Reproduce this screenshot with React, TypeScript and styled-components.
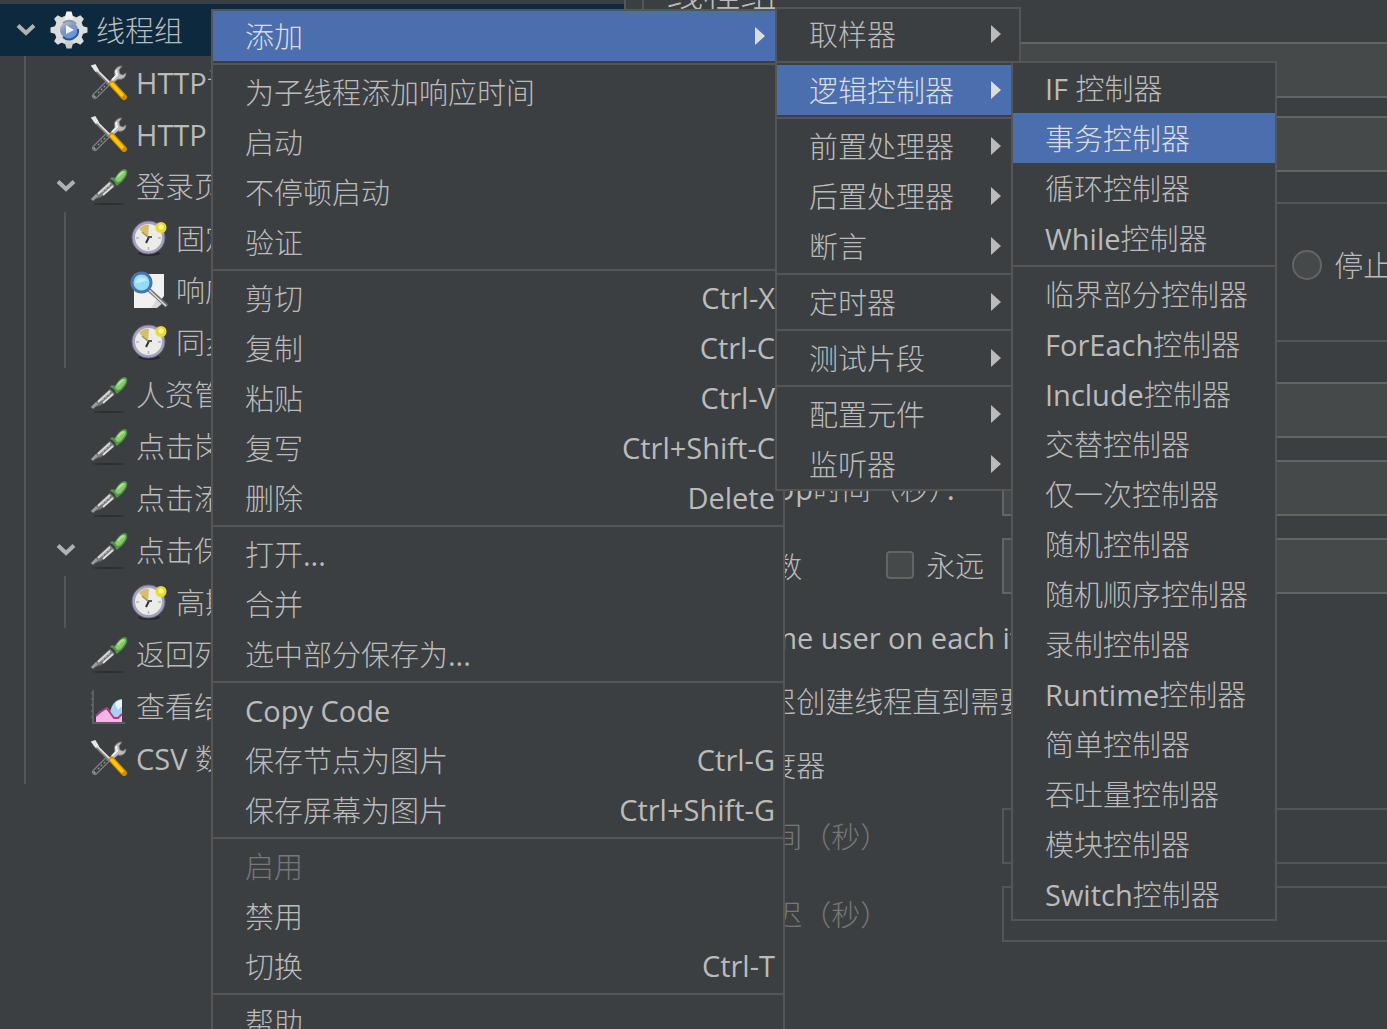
import React from "react";
import styled, { createGlobalStyle } from "styled-components";

const color = {
  panel: "#3c3f41",
  field: "#45494a",
  line: "#555555",
  fieldLine: "#646464",
  text: "#bbbbbb",
  muted: "#777777",
  select: "#4b6eaf",
  treeSelect: "#0d293e",
};

const GlobalStyle = createGlobalStyle`
  * { box-sizing: border-box; }
  body {
    margin: 0;
    overflow: hidden;
    background: ${color.panel};
    color: ${color.text};
    font: 400 29px/50px "Open Sans", "Noto Sans CJK SC Light", "Noto Sans CJK SC", sans-serif;
  }
  ul { margin: 0; padding: 0; list-style: none; }
  button, input { font: inherit; color: inherit; }
`;

const Workspace = styled.main`
  position: relative;
  display: grid;
  grid-template-columns: 45% 20px 1fr;
  height: 100vh;
  overflow: hidden;
`;

/* ---------- tree ---------- */

const TreePane = styled.nav`
  padding-top: 4px;
  min-width: 0;
  overflow: hidden;
`;

const Splitter = styled.div`
  border: solid ${color.line};
  border-width: 0 2px;
`;

const Branch = styled.ul`
  margin-left: 24px;
  padding-left: 14px;
  border-left: 2px solid ${color.line};
`;

const Node = styled.div<{ $selected?: boolean }>`
  display: flex;
  align-items: center;
  height: 52px;
  padding-left: 16px;
  white-space: nowrap;
  background: ${(p) => (p.$selected ? color.treeSelect : "transparent")};
`;

const Twisty = styled.span`
  display: flex;
  width: 34px;
  flex: none;
`;

const NodeIcon = styled.span`
  display: flex;
  width: 46px;
  flex: none;
`;

const NodeLabel = styled.span`
  padding-top: 2px;
`;

const Chevron = () => (
  <svg width="20" height="20" viewBox="0 0 20 20" fill="none" stroke="#afb1b3" strokeWidth="4">
    <path d="M2 5.5 10 13l8-7.5" />
  </svg>
);

const GearIcon = () => (
  <svg width="38" height="38" viewBox="0 0 38 38">
    <defs>
      <linearGradient id="gear" x1="0" y1="0" x2="0" y2="1">
        <stop offset="0" stopColor="#f6f6f6" />
        <stop offset="1" stopColor="#c8c8c8" />
      </linearGradient>
      <linearGradient id="hub" x1="0" y1="0" x2="0.5" y2="1">
        <stop offset="0" stopColor="#c3cad6" />
        <stop offset="0.5" stopColor="#8098bd" />
        <stop offset="1" stopColor="#5e96e6" />
      </linearGradient>
    </defs>
    <circle cx="19" cy="19" r="14.500" fill="#dedede" />
    {[0, 45, 90, 135].map((a) => (
      <path
        key={a}
        d="M15 5.500 16.500 .5h5L23 5.500v27L21.500 37.500h-5L15 32.500z"
        fill={a === 0 ? "url(#gear)" : "#dcdcdc"}
        transform={`rotate(${a} 19 19)`}
      />
    ))}
    <circle cx="19" cy="19" r="9" fill="url(#hub)" />
    <path d="M28 18a9 9 0 0 1-15 8" fill="none" stroke="#2f5290" strokeWidth="2" />
    <path d="M13 12a9 9 0 0 1 13 1" fill="none" stroke="#8d97a8" strokeWidth="2" />
    <path d="M16 14v9l8-4z" fill="#f4f7fb" />
  </svg>
);

const ToolsIcon = () => (
  <svg width="38" height="38" viewBox="0 0 38 38" fill="none">
    <path d="M5 33 18 20" stroke="#858585" strokeWidth="6" strokeLinecap="round" />
    <path d="M5 33 19 19" stroke="#3c3f41" strokeWidth="3.500" strokeLinecap="round" />
    <path d="M8 30 18 20" stroke="#999" strokeWidth="1.200" strokeDasharray="2 2" />
    <path d="M4 34l1-1" stroke="#aaa" strokeWidth="2.500" />
    <path
      d="M19 19 25 13c-2-5 1-10 7-10l-3 4 1 4 3 1 3-2c0 5-4 7-8 6l-6 5z"
      fill="#bcbcbc"
      stroke="#777"
      strokeWidth=".8"
    />
    <path d="m26 7 1 5-5 5" stroke="#f2f2f2" strokeWidth="2" />
    <path d="M4 5 20 21" stroke="#808080" strokeWidth="3.500" />
    <path d="M2 3 5 2l3 5-2 1zM5 5l16 16" fill="#e8e8e8" stroke="#e8e8e8" strokeWidth="1.600" />
    <path d="m22 21 12 13" stroke="#d18b00" strokeWidth="6" strokeLinecap="round" />
    <path d="m22 21 10 11" stroke="#f9c806" strokeWidth="3.500" strokeLinecap="round" />
  </svg>
);

const DropperIcon = () => (
  <svg width="38" height="38" viewBox="0 0 38 38" fill="none">
    <ellipse cx="19" cy="37" rx="16" ry="1" fill="#2d3031" />
    <path d="M2.500 32.500 8 25 20 14l5 5L11 30z" fill="#77797a" stroke="#5c5e5f" strokeWidth="1" />
    <path d="M8 27 20 16M13 28l10-9" stroke="#dedede" strokeWidth="1.800" />
    <path d="m12 25 9-8" stroke="#b5b5b5" strokeWidth="1.600" strokeDasharray="2 2" />
    <path d="m2 33 5-5" stroke="#9a9c9d" strokeWidth="3" />
    <path d="M20 12c1-2 3-2 5-1 2-4 6-9 10-9 3 1 3 5 0 9-2 3-4 5-6 6-1 2-2 2-3 1-1-3-3-5-6-6z" fill="#4f9548" />
    <path d="M25 12c3-5 7-9 10-8 2 1 0 5-2 7-2 3-4 4-6 4z" fill="#89c96c" />
    <path d="M28 10c2-3 4-5 6-5" stroke="#b2e297" strokeWidth="2" />
  </svg>
);

const ClockIcon = () => (
  <svg width="38" height="38" viewBox="0 0 38 38" fill="none">
    <ellipse cx="19" cy="34.500" rx="11" ry="2.500" fill="#26282a" />
    <circle cx="18.500" cy="18.500" r="15" fill="#ebebe9" stroke="#a5a2bd" strokeWidth="3" />
    <circle cx="18.500" cy="18.500" r="16.500" stroke="#66627f" strokeWidth="1" />
    <path d="M18 18 9 10c3-4 7-5 10-4z" fill="#d5bf6c" />
    <path d="m12 13 7 6" stroke="#a39257" strokeWidth="1.500" />
    <path d="m19 18-3 6" stroke="#302e2c" strokeWidth="2" />
    <path d="M18 18h4" stroke="#555" strokeWidth="2" />
    <path d="M18.500 28v3M6 19h3M28 19h3" stroke="#b8b8b8" strokeWidth="1.500" />
    <circle cx="31" cy="8.500" r="5.500" fill="#e9dc2e" />
    <circle cx="31" cy="8" r="2.500" fill="#fcf790" />
  </svg>
);

const SearchIcon = () => (
  <svg width="38" height="38" viewBox="0 0 38 38" fill="none">
    <path d="M4 3h30v34H4z" fill="#f1f1f1" />
    <path d="m34 25-9 12h9z" fill="#3c3f41" />
    <path d="m21 37 6-9 7 3-7 6z" fill="#d9d9d9" />
    <path d="m18 18 19 17" stroke="#707274" strokeWidth="4" />
    <path d="m19 19 17 16" stroke="#dedede" strokeWidth="1.500" />
    <circle cx="11.500" cy="11.500" r="9.500" fill="#93dcf4" stroke="#4775ab" strokeWidth="3" />
    <path d="M5 12c1-6 9-8 13-2-4-1-8 3-13 2z" fill="#bdebf9" />
  </svg>
);

const ChartIcon = () => (
  <svg width="38" height="38" viewBox="0 0 38 38" fill="none">
    <path d="M3 3v33h32" stroke="#67696b" strokeWidth="1.500" />
    <path d="M1 6h2M1 12h2M1 18h2M1 24h2M1 30h2" stroke="#67696b" strokeWidth="1.500" />
    <path d="M20 25c2-8 5-12 12-13v19l-9 1z" fill="#a9d0f8" />
    <path d="M25 17c2-3 4-4 7-4v6l-4 4z" fill="#eaf5ff" />
    <path d="M6 35v-6l10-7 5 5 3 4 3-1 5-4v9z" fill="#f7b5e7" />
    <path d="m6 29 4-4 5-3 2-1 4 6 3 4h4l4-4" stroke="#b03a85" strokeWidth="1.800" />
  </svg>
);

const icons = {
  gear: GearIcon,
  tools: ToolsIcon,
  dropper: DropperIcon,
  clock: ClockIcon,
  search: SearchIcon,
  chart: ChartIcon,
};

type TreeNode = { label: string; icon: keyof typeof icons; children?: TreeNode[] };

const tree: TreeNode = {
  label: "线程组",
  icon: "gear",
  children: [
    { label: "HTTP请求默认值", icon: "tools" },
    { label: "HTTP Cookie管理器", icon: "tools" },
    {
      label: "登录页面",
      icon: "dropper",
      children: [
        { label: "固定定时器", icon: "clock" },
        { label: "响应断言", icon: "search" },
        { label: "同步定时器", icon: "clock" },
      ],
    },
    { label: "人资管理", icon: "dropper" },
    { label: "点击岗位", icon: "dropper" },
    { label: "点击添加", icon: "dropper" },
    { label: "点击保存", icon: "dropper", children: [{ label: "高斯随机定时器", icon: "clock" }] },
    { label: "返回列表", icon: "dropper" },
    { label: "查看结果树", icon: "chart" },
    { label: "CSV 数据文件设置", icon: "tools" },
  ],
};

function TreeItem({ node, selected }: { node: TreeNode; selected?: boolean }) {
  const Icon = icons[node.icon];
  return (
    <li>
      <Node $selected={selected}>
        <Twisty>{node.children && <Chevron />}</Twisty>
        <NodeIcon>
          <Icon />
        </NodeIcon>
        <NodeLabel>{node.label}</NodeLabel>
      </Node>
      {node.children && (
        <Branch>
          {node.children.map((child) => (
            <TreeItem key={child.label} node={child} />
          ))}
        </Branch>
      )}
    </li>
  );
}

/* ---------- form ---------- */

const FormPane = styled.form`
  display: flex;
  flex-direction: column;
  min-width: 0;
  padding-left: 22px;
`;

const Title = styled.h1`
  flex: none;
  height: 22px;
  margin: -12px 0 32px;
  font-size: 37px;
  font-weight: 400;
  line-height: 10px;
  white-space: nowrap;
`;

const TextField = styled.input`
  width: 100%;
  height: 56px;
  padding: 0 12px;
  border: 2px solid ${color.fieldLine};
  border-radius: 0;
  background: ${color.field};
  &:disabled {
    border-color: ${color.line};
    background: ${color.panel};
  }
`;

const Heading = styled.div`
  display: flex;
  flex-direction: column;
  gap: 18px;
  padding-left: 236px;
  margin-right: -16px;
`;

const Section = styled.section`
  flex: none;
  border-top: 2px solid ${color.line};
`;

const ActionSection = styled(Section)`
  height: 138px;
  margin-top: 30px;
`;

const Choices = styled.div`
  display: flex;
  align-items: center;
  height: 122px;
  padding-left: 626px;
`;

const Check = styled.label`
  display: flex;
  align-items: center;
  gap: 12px;
  height: 50px;
  white-space: nowrap;
`;

const CheckText = styled.span`
  padding-top: 2px;
`;

const RadioBox = styled.input`
  appearance: none;
  flex: none;
  width: 30px;
  height: 30px;
  margin: 0;
  border: 2px solid ${color.fieldLine};
  border-radius: 50%;
  background: ${color.field};
`;

const CheckBox = styled.input`
  appearance: none;
  flex: none;
  width: 28px;
  height: 28px;
  margin: 0;
  border: 2px solid ${color.fieldLine};
  border-radius: 4px;
  background: ${color.field};
`;

const Fields = styled.div`
  display: flex;
  flex-direction: column;
  gap: 22px;
  padding: 40px 0 0 20px;
  margin-right: -16px;
`;

const ScheduleFields = styled(Fields)`
  padding-top: 0;
`;

const FieldRow = styled.div<{ $disabled?: boolean }>`
  display: grid;
  grid-template-columns: 316px 1fr;
  align-items: center;
  color: ${(p) => (p.$disabled ? color.muted : "inherit")};
`;

const TextRow = styled.div`
  padding-left: 316px;
`;

const RowLabel = styled.label`
  padding-top: 2px;
  white-space: nowrap;
`;

const LabelPair = styled.div`
  display: flex;
  justify-content: space-between;
  padding-right: 18px;
`;

const Options = styled.div`
  display: flex;
  flex-direction: column;
  gap: 14px;
  padding: 18px 0 18px 32px;
`;

/* ---------- popup menus ---------- */

const MenuPanel = styled.ul<{ $left: number; $top: number; $width: number }>`
  position: absolute;
  left: ${(p) => p.$left}px;
  top: ${(p) => p.$top}px;
  width: ${(p) => p.$width}px;
  border: 2px solid ${color.line};
  background: ${color.panel};
`;

const MenuLine = styled.li`
  height: 6px;
  border: solid ${color.panel};
  border-width: 2px 0;
  background: ${color.line};
`;

const MenuButton = styled.button<{ $active?: boolean; $arrow?: boolean }>`
  display: flex;
  align-items: center;
  justify-content: space-between;
  width: 100%;
  height: 50px;
  padding: 0 ${(p) => (p.$arrow ? 18 : 8)}px 0 32px;
  border: 0;
  background: ${(p) => (p.$active ? color.select : "transparent")};
  color: ${(p) => (p.$active ? "#dddddd" : color.text)};
  text-align: left;
  white-space: nowrap;
  &:disabled {
    color: ${color.muted};
  }
`;

const MenuText = styled.span`
  padding-top: 2px;
`;

const Arrow = () => (
  <svg width="10" height="18" viewBox="0 0 10 18" fill="currentColor">
    <path d="M0 0v18l10-9z" />
  </svg>
);

type Item = { label: string; keys?: string; sub?: boolean; active?: boolean; disabled?: boolean };

const toItems = (...labels: string[]): Item[] => labels.map((label) => ({ label }));
const toSubs = (...labels: string[]): Item[] => labels.map((label) => ({ label, sub: true }));

const contextMenu: Item[][] = [
  [{ label: "添加", sub: true, active: true }],
  toItems("为子线程添加响应时间", "启动", "不停顿启动", "验证"),
  [
    { label: "剪切", keys: "Ctrl-X" },
    { label: "复制", keys: "Ctrl-C" },
    { label: "粘贴", keys: "Ctrl-V" },
    { label: "复写", keys: "Ctrl+Shift-C" },
    { label: "删除", keys: "Delete" },
  ],
  toItems("打开...", "合并", "选中部分保存为..."),
  [
    { label: "Copy Code" },
    { label: "保存节点为图片", keys: "Ctrl-G" },
    { label: "保存屏幕为图片", keys: "Ctrl+Shift-G" },
  ],
  [{ label: "启用", disabled: true }, { label: "禁用" }, { label: "切换", keys: "Ctrl-T" }],
  toItems("帮助"),
];

const addMenu: Item[][] = [
  toSubs("取样器"),
  [{ label: "逻辑控制器", sub: true, active: true }],
  toSubs("前置处理器", "后置处理器", "断言"),
  toSubs("定时器"),
  toSubs("测试片段"),
  toSubs("配置元件", "监听器"),
];

const controllerMenu: Item[][] = [
  [
    { label: "IF 控制器" },
    { label: "事务控制器", active: true },
    { label: "循环控制器" },
    { label: "While控制器" },
  ],
  toItems(
    "临界部分控制器",
    "ForEach控制器",
    "Include控制器",
    "交替控制器",
    "仅一次控制器",
    "随机控制器",
    "随机顺序控制器",
    "录制控制器",
    "Runtime控制器",
    "简单控制器",
    "吞吐量控制器",
    "模块控制器",
    "Switch控制器",
  ),
];

function Menu({ groups, left, top, width }: { groups: Item[][]; left: number; top: number; width: number }) {
  return (
    <MenuPanel role="menu" $left={left} $top={top} $width={width}>
      {groups.map((group, i) => (
        <React.Fragment key={i}>
          {i > 0 && <MenuLine role="separator" />}
          {group.map((item) => (
            <li key={item.label} role="none">
              <MenuButton
                type="button"
                role="menuitem"
                disabled={item.disabled}
                $active={item.active}
                $arrow={item.sub}
              >
                <MenuText>{item.label}</MenuText>
                {item.keys && <span>{item.keys}</span>}
                {item.sub && <Arrow />}
              </MenuButton>
            </li>
          ))}
        </React.Fragment>
      ))}
    </MenuPanel>
  );
}

export default function App() {
  return (
    <>
      <GlobalStyle />
      <Workspace>
        <TreePane>
          <ul>
            <TreeItem node={tree} selected />
          </ul>
        </TreePane>
        <Splitter />
        <FormPane>
          <Title>线程组</Title>
          <Heading>
            <TextField aria-label="名称" />
            <TextField aria-label="注释" />
          </Heading>
          <ActionSection>
            <Choices>
              <Check>
                <RadioBox type="radio" name="on-error" />
                <CheckText>停止线程</CheckText>
              </Check>
            </Choices>
          </ActionSection>
          <Section>
            <Fields>
              <TextRow>
                <TextField aria-label="线程数" />
              </TextRow>
              <FieldRow>
                <RowLabel htmlFor="ramp">Ramp-Up时间（秒）：</RowLabel>
                <TextField id="ramp" />
              </FieldRow>
              <FieldRow>
                <LabelPair>
                  <RowLabel htmlFor="loops">循环次数</RowLabel>
                  <Check>
                    <CheckBox type="checkbox" />
                    <CheckText>永远</CheckText>
                  </Check>
                </LabelPair>
                <TextField id="loops" />
              </FieldRow>
            </Fields>
            <Options>
              <Check>
                <CheckBox type="checkbox" />
                <CheckText>Same user on each iteration</CheckText>
              </Check>
              <Check>
                <CheckBox type="checkbox" />
                <CheckText>延迟创建线程直到需要</CheckText>
              </Check>
              <Check>
                <CheckBox type="checkbox" />
                <CheckText>调度器</CheckText>
              </Check>
            </Options>
            <ScheduleFields>
              <FieldRow $disabled>
                <RowLabel htmlFor="duration">持续时间（秒）</RowLabel>
                <TextField id="duration" disabled />
              </FieldRow>
              <FieldRow $disabled>
                <RowLabel htmlFor="delay">启动延迟（秒）</RowLabel>
                <TextField id="delay" disabled />
              </FieldRow>
            </ScheduleFields>
          </Section>
        </FormPane>
        <Menu groups={contextMenu} left={211} top={9} width={574} />
        <Menu groups={addMenu} left={775} top={7} width={246} />
        <Menu groups={controllerMenu} left={1011} top={61} width={266} />
      </Workspace>
    </>
  );
}
